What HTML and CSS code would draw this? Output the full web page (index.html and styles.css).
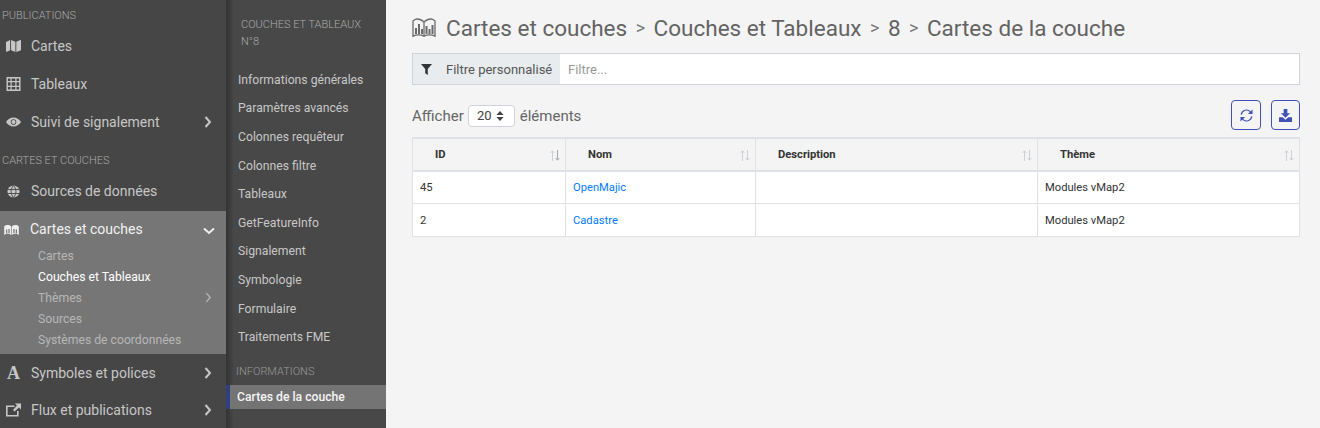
FILE: index.html
```html
<!DOCTYPE html>
<html lang="fr">
<head>
<meta charset="utf-8">
<title>Cartes de la couche</title>
<link rel="stylesheet" href="styles.css">
</head>
<body>
<div class="app">
  <nav class="side">
    <div class="cap cap-first">PUBLICATIONS</div>
    <a class="item"><svg class="ic" viewBox="0 0 16 14"><path d="M0 2.600 4.400 .6V11.600L0 13.400ZM5.400.6 10 2.400V13.400L5.400 11.600ZM11 2.400 16 .4V11.500L11 13.400Z"/></svg><span>Cartes</span></a>
    <a class="item"><svg class="ic" viewBox="0 0 14 14"><path fill-rule="evenodd" d="M0 0H14V14H0ZM1.400 1.400V4H4V1.400ZM5.200 1.400V4H8.800V1.400ZM10 1.400V4H12.600V1.400ZM1.400 5.200V8.800H4V5.200ZM5.200 5.200V8.800H8.800V5.200ZM10 5.200V8.800H12.600V5.200ZM1.400 10V12.600H4V10ZM5.200 10V12.600H8.800V10ZM10 10V12.600H12.600V10Z"/></svg><span>Tableaux</span></a>
    <a class="item"><svg class="ic" viewBox="0 0 16 10"><path fill-rule="evenodd" d="M0 5C2 2 4.800 .2 8 .2S14 2 16 5C14 8 11.200 9.800 8 9.800S2 8 0 5ZM8 2A3 3 0 1 0 8 8 3 3 0 0 0 8 2Z"/><circle cx="8" cy="5" r="2.200"/></svg><span>Suivi de signalement</span><svg class="chev" viewBox="0 0 8 12"><path d="M1.500 1 6 6 1.500 11"/></svg></a>
    <div class="cap cap-second">CARTES ET COUCHES</div>
    <a class="item"><svg class="ic ic-globe" viewBox="0 0 14 14"><circle cx="7" cy="7" r="6.500"/><path class="globe-lines" d="M.5 4.800H13.500M.5 9.200H13.500M7 .5C3.500 4.500 3.500 9.500 7 13.500C10.500 9.500 10.500 4.500 7 .5Z"/></svg><span>Sources de données</span></a>
    <div class="group">
      <a class="item item-open"><svg class="ic ic-atlas" viewBox="0 0 24 18"><path d="M0 4C3 1 8 1 11.500 4V18C8 15 3 15 0 18ZM12.500 4C16 1 21 1 24 4V18C21 15 16 15 12.500 18Z"/><path class="atlas-bars" d="M3 9h2v6H3zM7 8h2v7H7zM15 8h2v7h-2zM19 9h2v6h-2z"/></svg><span>Cartes et couches</span><svg class="chev chev-down" viewBox="0 0 12 8"><path d="M1 1.500 6 6 11 1.500"/></svg></a>
      <div class="sub">
        <a>Cartes</a>
        <a class="on">Couches et Tableaux</a>
        <a class="has-chev">Thèmes<svg class="chev-thin" viewBox="0 0 8 12"><path d="M1.500 1 6 6 1.500 11"/></svg></a>
        <a>Sources</a>
        <a>Systèmes de coordonnées</a>
      </div>
    </div>
    <a class="item item-b"><span class="ic-letter">A</span><span>Symboles et polices</span><svg class="chev" viewBox="0 0 8 12"><path d="M1.500 1 6 6 1.500 11"/></svg></a>
    <a class="item item-b"><svg class="ic" viewBox="0 0 15 13"><path fill-rule="evenodd" d="M0 2H8.500V3.600H1.600V11.400H11V7.500H12.600V13H0ZM9 0H15V6L13 4 8.500 8 7 6.500 11 2Z"/></svg><span>Flux et publications</span><svg class="chev" viewBox="0 0 8 12"><path d="M1.500 1 6 6 1.500 11"/></svg></a>
  </nav>
  <nav class="side2">
    <div class="cap2">COUCHES ET TABLEAUX<br>N°8</div>
    <div class="links">
      <a>Informations générales</a>
      <a>Paramètres avancés</a>
      <a>Colonnes requêteur</a>
      <a>Colonnes filtre</a>
      <a>Tableaux</a>
      <a>GetFeatureInfo</a>
      <a>Signalement</a>
      <a>Symbologie</a>
      <a>Formulaire</a>
      <a>Traitements FME</a>
    </div>
    <div class="cap3">INFORMATIONS</div>
    <a class="cur">Cartes de la couche</a>
  </nav>
  <main class="main">
    <h1 class="crumbs">
      <svg class="atlas" viewBox="0 0 24 19"><path fill="none" stroke="#6a6a6a" stroke-width="1.300" d="M12 4C9 1 5 .5 3 1.500L1 3V18.300C4 16.500 9 16.500 12 18.300C15 16.500 20 16.500 23 18.300V3L21 1.500C19 .5 15 1 12 4ZM12 4V18.300"/><path fill="#6a6a6a" d="M3 10h2v6H3zM6 6h2v10H6zM9 11h2v5H9zM13.500 8h2v8h-2zM16.500 11h2v5h-2zM19.500 7h2v9h-2z"/></svg>
      <span>Cartes et couches</span><i>&gt;</i><span>Couches et Tableaux</span><i>&gt;</i><span>8</span><i>&gt;</i><span>Cartes de la couche</span>
    </h1>
    <div class="filter">
      <div class="filter-label"><svg class="funnel" viewBox="0 0 12 12"><path d="M0 0H12L7.400 5.500V12L4.600 10V5.500Z"/></svg><span>Filtre personnalisé</span></div>
      <div class="filter-input">Filtre...</div>
    </div>
    <div class="toolbar">
      <div class="show">Afficher <span class="select">20<svg class="updown" viewBox="0 0 8 11"><path d="M4 0 8 4.300H0ZM0 6.700H8L4 11Z"/></svg></span> éléments</div>
      <div class="btns">
        <button class="btn"><svg viewBox="0 0 14 14"><path fill="none" stroke="#3f51b5" stroke-width="1.300" d="M1.300 6A5.800 5.800 0 0 1 11.300 3M12.700 8A5.800 5.800 0 0 1 2.700 11"/><path fill="#3f51b5" d="M13.500 .5V5.500H8.500ZM.5 13.500V8.500H5.500Z"/></svg></button>
        <button class="btn btn-b"><svg viewBox="0 0 14 14"><path fill="#3f51b5" d="M5 0H9V4.500H12L7 9.500 2 4.500H5ZM0 9H4L7 11.500 10 9H14V14H0Z"/></svg></button>
      </div>
    </div>
    <table class="tbl">
      <colgroup><col class="c1"><col class="c2"><col class="c3"><col class="c4"></colgroup>
      <thead>
        <tr>
          <th><div class="th th-id"><span>ID</span><svg class="sort" viewBox="0 0 10 11"><path d="M2.500 11V1M.5 3 2.500 .8 4.500 3" stroke="#cdd0d4"/><path d="M7.500 0V10M5.500 8 7.500 10.200 9.500 8" stroke="#a4a7ab"/></svg></div></th>
          <th><div class="th"><span>Nom</span><svg class="sort" viewBox="0 0 10 11"><path d="M2.500 11V1M.5 3 2.500 .8 4.500 3" stroke="#cdd0d4"/><path d="M7.500 0V10M5.500 8 7.500 10.200 9.500 8" stroke="#cdd0d4"/></svg></div></th>
          <th><div class="th"><span>Description</span><svg class="sort" viewBox="0 0 10 11"><path d="M2.500 11V1M.5 3 2.500 .8 4.500 3" stroke="#cdd0d4"/><path d="M7.500 0V10M5.500 8 7.500 10.200 9.500 8" stroke="#cdd0d4"/></svg></div></th>
          <th><div class="th"><span>Thème</span><svg class="sort" viewBox="0 0 10 11"><path d="M2.500 11V1M.5 3 2.500 .8 4.500 3" stroke="#cdd0d4"/><path d="M7.500 0V10M5.500 8 7.500 10.200 9.500 8" stroke="#cdd0d4"/></svg></div></th>
        </tr>
      </thead>
      <tbody>
        <tr><td>45</td><td><a>OpenMajic</a></td><td></td><td>Modules vMap2</td></tr>
        <tr><td>2</td><td><a>Cadastre</a></td><td></td><td>Modules vMap2</td></tr>
      </tbody>
    </table>
  </main>
</div>
</body>
</html>
```

FILE: styles.css
```css
* { box-sizing: border-box; }
html, body { margin: 0; height: 100%; overflow: hidden; }
body { font-family: Roboto, "Liberation Sans", sans-serif; background: #f4f4f4; }
.app { display: flex; height: 428px; }

.side { width: 226px; flex: none; background: #464646; color: #c7c7c7; }
.cap { font-size: 11px; line-height: 14px; color: #aaa; padding-left: 2px; font-weight: 300; }
.cap-first { padding-top: 9px; height: 27px; }
.cap-second { height: 14px; margin-top: 13px; margin-bottom: 4px; }
.item { display: flex; align-items: center; height: 38px; padding-left: 6px; font-size: 14px; color: #c7c7c7; }
.ic { width: 15px; height: 14px; fill: #c7c7c7; flex: none; margin-right: 10px; }
.ic-globe { width: 13px; height: 13px; margin-left: 1px; margin-right: 11px; }
.globe-lines { fill: none; stroke: #464646; stroke-width: 1; }
.ic-atlas { width: 15px; height: 11px; margin-left: -2px; margin-right: 11px; fill: #eee; }
.atlas-bars { fill: #767676; }
.ic-letter { width: 15px; margin-right: 10px; flex: none; font-family: "Liberation Serif", serif; font-weight: 700; font-size: 18px; line-height: 18px; text-align: center; color: #c7c7c7; }
.chev { width: 8px; height: 12px; fill: none; stroke: #c7c7c7; stroke-width: 2; margin-left: auto; margin-right: 14px; }
.chev-down { width: 12px; height: 8px; stroke: #eee; margin-right: 11px; margin-top: 4px; }
.group { background: #767676; height: 143px; margin-top: 1px; }
.item-open { color: #f2f2f2; height: 36px; }
.sub { display: flex; flex-direction: column; margin-top: -2px; font-size: 12.200px; color: #b7b7b7; padding-left: 38px; }
.sub a { height: 21px; display: flex; align-items: center; }
.sub .on { color: #fff; }
.has-chev { padding-right: 14px; justify-content: space-between; }
.chev-thin { width: 7px; height: 11px; fill: none; stroke: #b7b7b7; stroke-width: 1.500; }
.item-b { height: 37px; }

.side2 { width: 160px; flex: none; background: linear-gradient(90deg, #333 0, #484848 8px, #484848 100%); color: #c7c7c7; }
.cap2 { font-size: 11px; line-height: 17px; color: #aaa; padding: 16px 0 0 15px; font-weight: 300; }
.links { display: flex; flex-direction: column; margin-top: 15.500px; font-size: 12.200px; padding-left: 12px; }
.links a { height: 28.600px; display: flex; align-items: center; }
.cap3 { font-size: 11px; line-height: 14px; color: #999; padding-left: 10px; margin-top: 13.500px; font-weight: 300; }
.cur { display: flex; align-items: center; height: 24px; margin-top: 6px; background: #747474; border-left: 4px solid #303f7f; padding-left: 7px; font-size: 12.200px; font-weight: 500; color: #f4f4f4; }

.main { flex: 1; min-width: 0; padding: 13px 20px 0 26px; }
.crumbs { display: flex; align-items: center; margin: 0; height: 29px; font-size: 22.500px; font-weight: 400; color: #636363; }
.crumbs i { font-style: normal; font-size: 18px; margin: 0 8.500px; color: #777; }
.atlas { width: 24px; height: 19px; margin-right: 10px; }
.filter { display: flex; height: 32px; margin-top: 11px; border: 1px solid #d0d3d9; background: #fff; font-size: 13px; }
.filter-label { display: flex; align-items: center; width: 147px; background: #e9ecef; color: #555; }
.funnel { width: 11px; height: 11px; fill: #333; margin: 1px 14px 0 8px; }
.filter-input { display: flex; align-items: center; padding-left: 8px; color: #9a9a9a; }
.toolbar { display: flex; justify-content: space-between; align-items: center; height: 30px; margin-top: 15px; }
.show { display: flex; align-items: center; font-size: 15px; color: #666; margin-top: 1px; }
.select { display: inline-flex; align-items: center; justify-content: center; gap: 4px; width: 47px; height: 22px; margin: 0 5px 0 4px; padding-right: 2px; background: #fff; border: 1px solid #ced4da; border-radius: 4px; font-size: 13px; color: #444; }
.updown { width: 8px; height: 10px; fill: #444; }
.btns { display: flex; gap: 10px; }
.btn { width: 30px; height: 30px; padding: 0; background: transparent; border: 1px solid #3f51b5; border-radius: 4px; display: flex; align-items: center; justify-content: center; }
.btn-b { width: 29px; }
.btn svg { width: 13px; height: 13px; }
.tbl { width: 888px; margin-top: 7px; table-layout: fixed; border-collapse: collapse; font-size: 11.200px; color: #333; background: #fff; }
.c1 { width: 153px; } .c2 { width: 190px; } .c3 { width: 282px; } .c4 { width: 262px; }
.tbl th, .tbl td { border: 1px solid #dee2e6; padding: 0; }
.tbl th { height: 33px; background: #f4f4f4; border-top-width: 2px; border-bottom-width: 2px; font-weight: 700; text-align: left; color: #333; }
.tbl td { height: 32.500px; padding-left: 7px; }
.tbl tr + tr td { padding-top: 1px; }
.tbl a { color: #007bff; }
.th { display: flex; justify-content: space-between; align-items: center; padding: 0 5px 0 22px; }
.sort { width: 10px; height: 11px; fill: none; margin-top: 2px; }
```
